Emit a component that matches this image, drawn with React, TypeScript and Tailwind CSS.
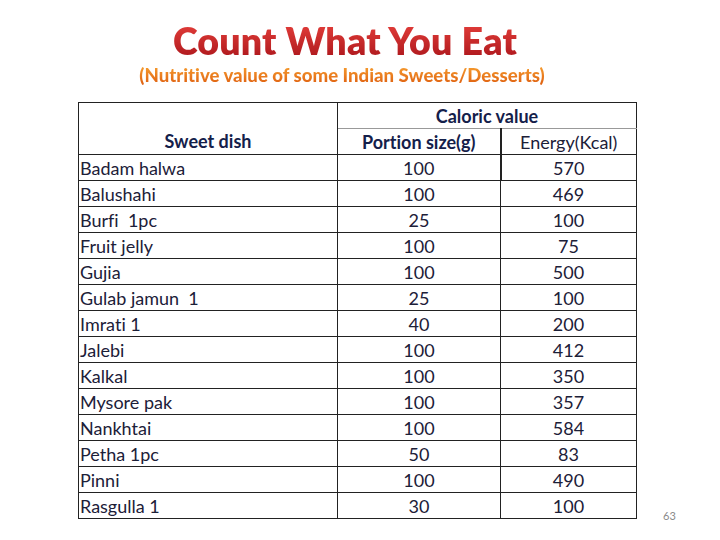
const rows: [string, number, number][] = [
  ['Badam halwa', 100, 570],
  ['Balushahi', 100, 469],
  ['Burfi  1pc', 25, 100],
  ['Fruit jelly', 100, 75],
  ['Gujia', 100, 500],
  ['Gulab jamun  1', 25, 100],
  ['Imrati 1', 40, 200],
  ['Jalebi', 100, 412],
  ['Kalkal', 100, 350],
  ['Mysore pak', 100, 357],
  ['Nankhtai', 100, 584],
  ['Petha 1pc', 50, 83],
  ['Pinni', 100, 490],
  ['Rasgulla 1', 30, 100],
]

export default function App() {
  return (
    <div className="w-[720px] h-[540px] bg-white relative overflow-hidden font-['Lato','Liberation_Sans',sans-serif] [font-variant-ligatures:none]">
      <div className="flex flex-col items-center pt-[20px]">
        <h1 className="text-[37.5px] leading-[42px] font-extrabold tracking-[0.2px] bg-gradient-to-b from-[#e8403c] to-[#a8121a] bg-clip-text text-transparent ml-[-30px]">
          Count What You Eat
        </h1>
        <p className="mt-[3px] text-[18.6px] leading-[21px] font-black bg-gradient-to-b from-[#f7a030] to-[#dc5a0c] bg-clip-text text-transparent ml-[-36px]">
          (Nutritive value of some Indian Sweets/Desserts)
        </p>
      </div>

      <table className="ml-[78px] mt-[16px] border-collapse table-fixed text-[18px] leading-[24px] text-[#1c2038]">
        <colgroup>
          <col className="w-[259px]" />
          <col className="w-[163px]" />
          <col className="w-[136px]" />
        </colgroup>
        <thead>
          <tr className="h-[26px]">
            <th rowSpan={2} className="border border-[#222] align-bottom text-center font-bold text-[#14204a] pb-[1px]">
              Sweet dish
            </th>
            <th colSpan={2} className="border border-[#222] border-b-[#999] text-center font-bold text-[#14204a] p-0">
              Caloric value
            </th>
          </tr>
          <tr className="h-[26px]">
            <th className="border border-[#222] border-t-[#999] border-r-2 text-center font-bold text-[#14204a] p-0">
              Portion size(g)
            </th>
            <th className="border border-[#222] border-t-[#999] text-center font-normal p-0">
              Energy(Kcal)
            </th>
          </tr>
        </thead>
        <tbody>
          {rows.map(([name, portion, kcal], i) => (
            <tr key={name} className="h-[26px]">
              <td className="border border-[#222] pl-[1px] py-0 whitespace-pre">{name}</td>
              <td className={`border border-[#222] text-center p-0 ${i === 0 ? 'border-r-2' : ''}`}>{portion}</td>
              <td className="border border-[#222] text-center p-0">{kcal}</td>
            </tr>
          ))}
        </tbody>
      </table>

      <div className="absolute left-[663px] top-[508px] text-[11px] text-[#8a8a8a]">63</div>
    </div>
  )
}
